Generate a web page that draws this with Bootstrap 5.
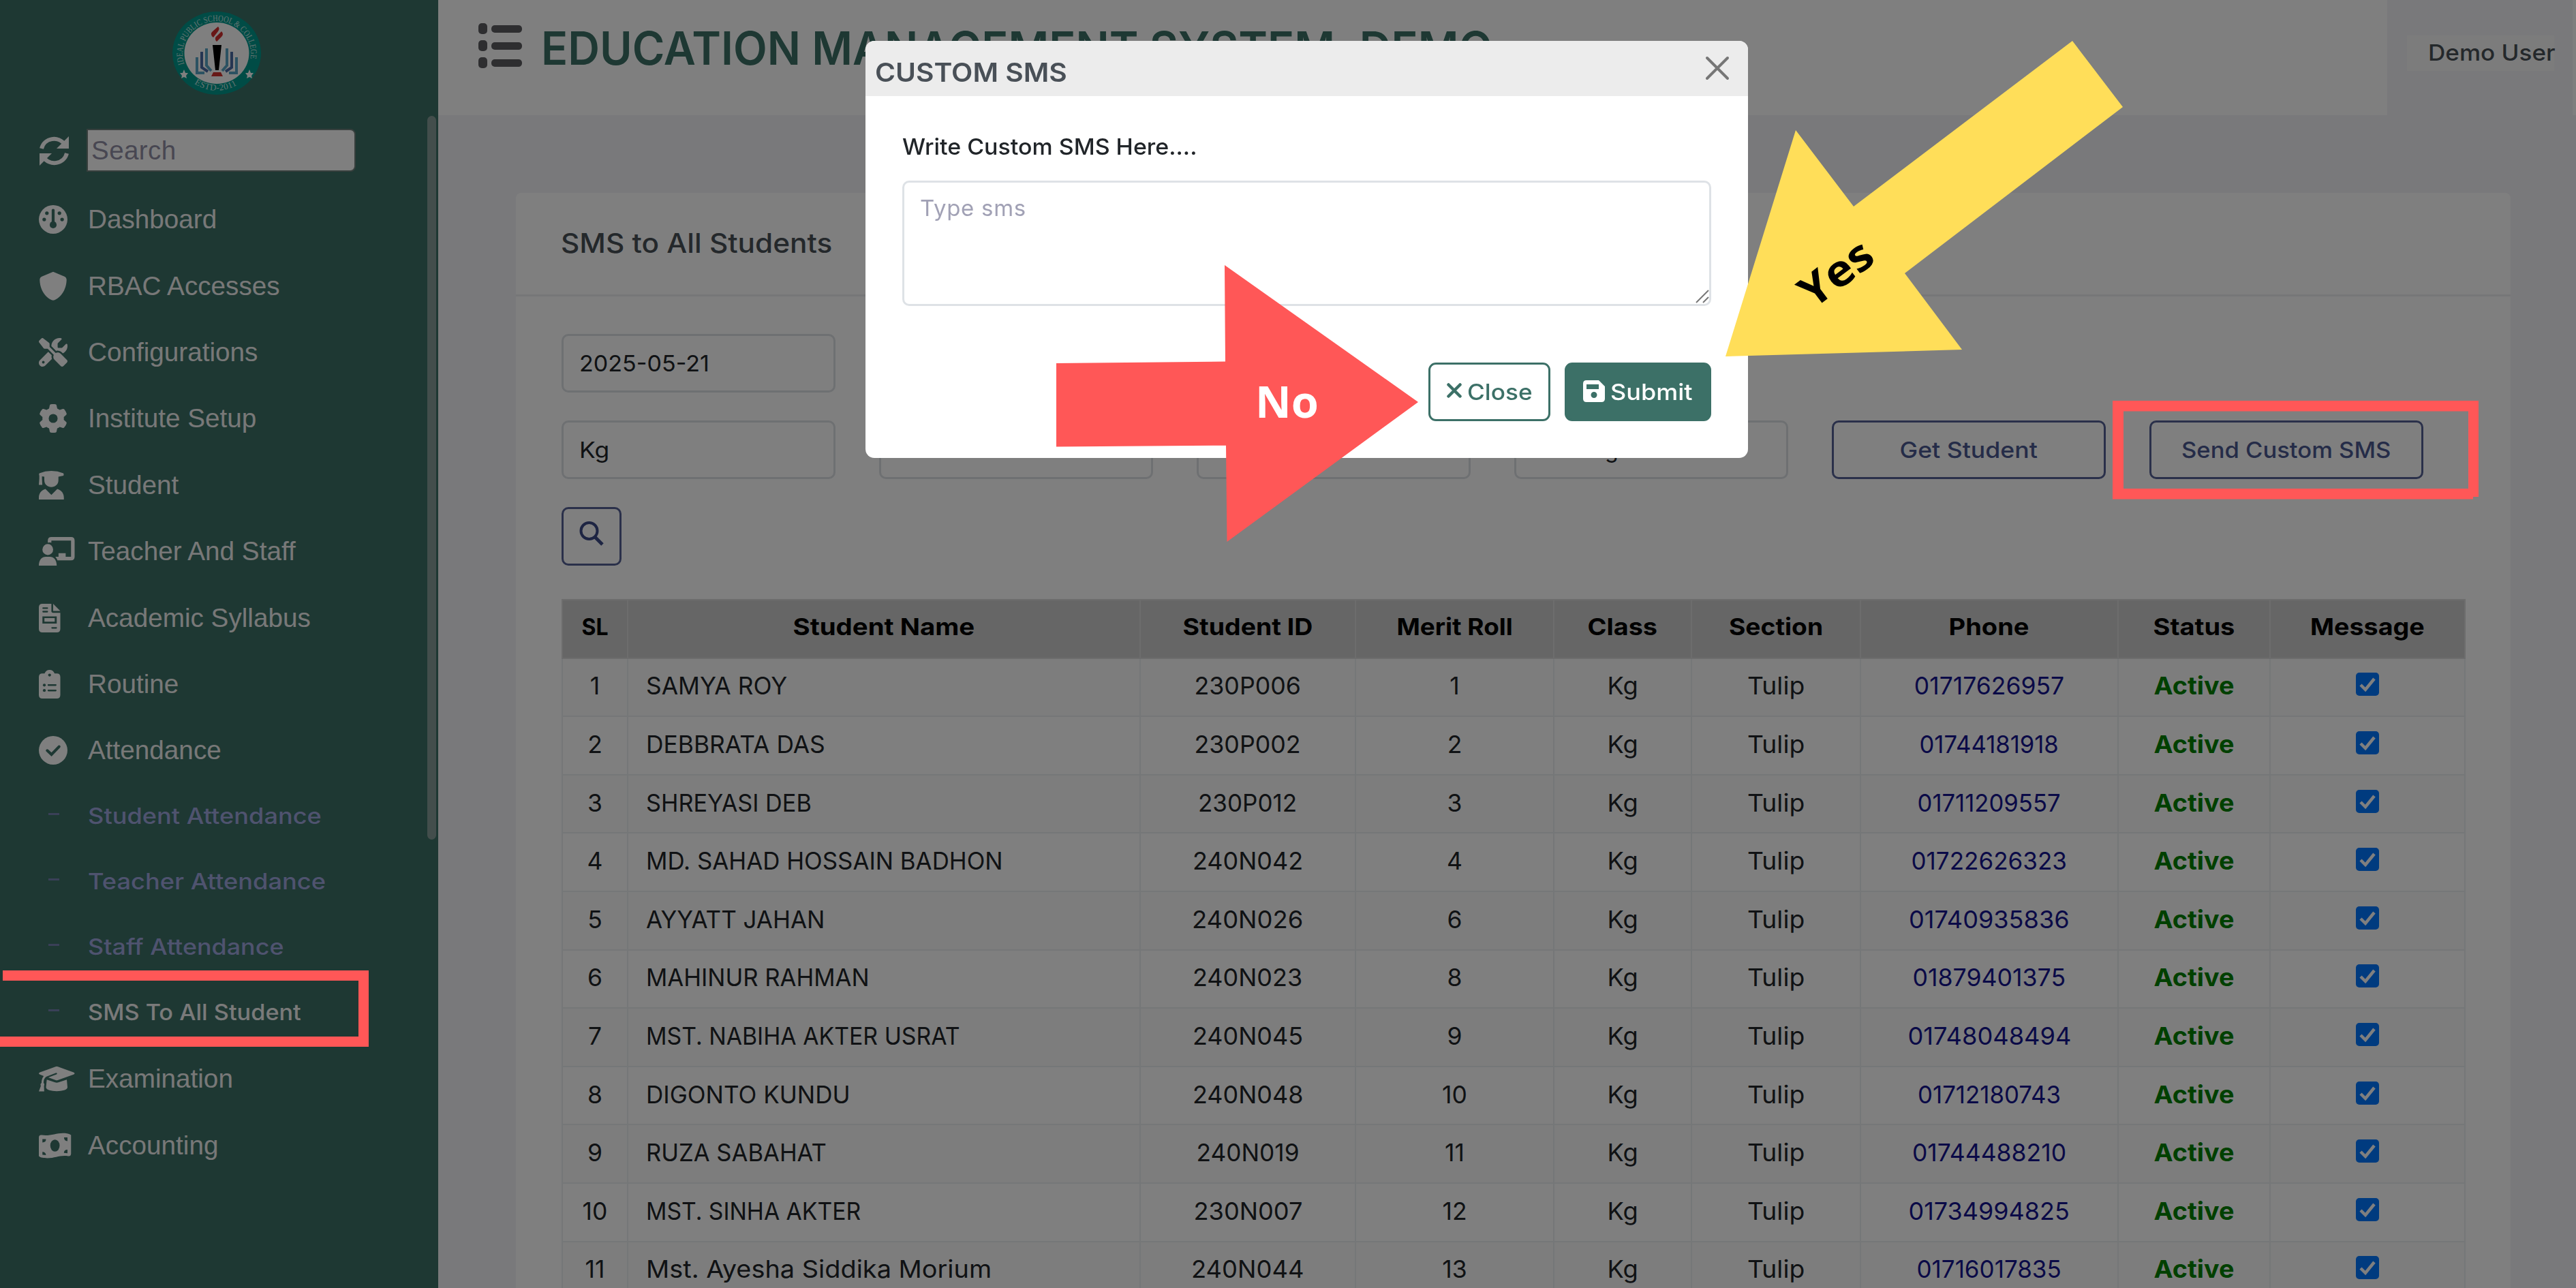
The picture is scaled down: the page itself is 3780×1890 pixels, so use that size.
<!DOCTYPE html>
<html lang="en">
<head>
<meta charset="utf-8">
<title>Education Management System</title>
<link href="https://cdn.jsdelivr.net/npm/bootstrap@5.3.0/dist/css/bootstrap.min.css" rel="stylesheet">
<style>
body{width:3780px;height:1890px;overflow:hidden;background:#f3f3f7;font-family:Inter,sans-serif;font-size:34px;line-height:1.5;color:#495057}
[data-w]{display:inline-block;white-space:nowrap;transform-origin:0 50%}
.btn-navy [data-w],.roster [data-w]{transform-origin:50% 50%}
.roster td:nth-child(2) [data-w]{transform-origin:0 50%}
.side{width:643px;height:1890px;background:#3c7067;position:relative;flex:none}
.side-thumb{position:absolute;left:627px;top:170px;width:13px;height:1062px;border-radius:7px;background:#869d98}
.logo-row{height:168px;padding:14px 0 0 250px}
.search-row{height:105.5px;padding:21px 0 0 57px}
.search-row svg{width:45px;height:45px;margin:10px 25px 0 0}
.search-row input{width:395px;height:63px;border:2px solid #6f7f7b;border-radius:0 8px 8px 0;background:#fff;padding:0 5px;font:38.6px "Liberation Sans",sans-serif;letter-spacing:.4px}
.search-row input::placeholder{color:#918fa5;opacity:1}
.side-link{height:97.4px;padding-left:57px;color:#f0f0f0;font:38.7px "Liberation Sans",sans-serif;text-decoration:none}
.side-link .ico{width:72px;height:42px;flex:none}
.side-link svg{height:42px;display:block;fill:#fff;overflow:visible}
.sub-link{height:96.2px;padding-left:71px;color:#9ea6de;font-weight:500;font-size:32.5px;text-decoration:none}
.sub-link i{width:16px;height:3px;background:#7580b0;margin:-8px 42px 0 0}
.sub-link.on{color:#f4f4f4}
.topbar{height:169px;background:#fff;padding-left:59px}
.topbar h1{font-size:67px;font-weight:600;color:#3c7067;margin:31px 0 0;line-height:80px}
.list-ico{width:64px;height:66px;margin:34px 28px 0 0}
.user-zone{width:272px;height:169px;background:#f3f3f7;margin-right:5px;padding:52px 27px 0 29px}
.user-chip{height:52px;background:#f9f9f9;color:#495057;font-weight:500;font-size:33px;line-height:51px;padding-left:31px}
.panel{margin:114px 96px 0 114px;width:2927px;height:1640px;border:0;border-radius:8px;background:#fff}
.panel-head{height:152px;border-bottom:3px solid #eceef1;padding:0 66px;font-weight:500;font-size:39px;color:#495057}
.panel-main{padding:55px 66px 0 67px}
.grid-row{gap:64px;margin-bottom:41px}
.grid-row .form-control{width:402px;height:86px;border:3px solid #dce0e4;border-radius:10px;font-size:33px;padding:1px 23px 0;color:#212529;background:#fff}
.btn-navy{width:402px;height:86px;border:3px solid #556195;border-radius:10px;color:#4a5890;font-size:33px;font-weight:500;padding:0;line-height:78px}
.roster{width:2792px;table-layout:fixed;font-size:35.5px;margin:49px 0 0;border-collapse:collapse}
.roster th,.roster td{height:85.6px;padding:0 0 2px;text-align:center;vertical-align:middle;border:2px solid #ebeef0!important;line-height:50px;color:#212529}
.roster th{background:#ccc!important;color:#000;font-weight:700;border-color:#dadada!important;font-size:34.5px;padding-bottom:5px}
.roster tr:nth-child(odd) td{background:#fbfbfb}
.roster td:nth-child(2){text-align:left;padding-left:26px}
.roster td:nth-child(7){color:#15158f}
.roster td:nth-child(8){color:#008000;font-weight:700}
.tick{width:34px;height:34px;display:block;margin:-6px auto 0}
.modal-backdrop{width:3780px;height:1890px;z-index:10}
.modal{z-index:20;overflow:hidden}
.modal-dialog{width:1295px;max-width:none;margin:60px 0 0 1270px}
.modal-content{height:612px;border:0;border-radius:13px;overflow:hidden}
.modal-header{height:81px;background:#ececec;border:0;padding:11px 27px 0 14px;border-radius:0}
.modal-header b{font-size:38px;font-weight:600;color:#495057}
.modal-body{padding:50px 54px 0}
.modal-body label{font-size:33px;font-weight:500;color:#212529;height:50px;margin-bottom:24px;display:block}
.modal-body textarea{width:1187px;height:184px;border:3px solid #dee2e6;border-radius:10px;font-size:33px;padding:13px 23px;resize:none;letter-spacing:.7px}
.modal-body textarea::placeholder{color:#a1a1b5;opacity:1}
.grip{position:absolute;left:1218px;top:284px;width:20px;height:20px}
.modal-foot{padding:83px 54px 0;gap:21px}
.modal-foot .btn{height:86px;border:3px solid #3c7067;border-radius:11px;font-size:33px;font-weight:500;padding:0 24px;line-height:78px}
.btn-shut{width:179px;color:#3c7067;background:#fff}
.btn-send{width:215px;color:#fff;background:#3c7067}
.notes{position:absolute;left:0;top:0;z-index:30}
</style>
</head>
<body>
<div class="d-flex">
<aside class="side">
  <div class="logo-row">
    <svg width="136" height="128" viewBox="-68 -64 136 128">
      <defs><path id="arcT" d="M-47.500 16 A50 48 0 1 1 47.500 16"/><path id="arcB" d="M-42 37 A57 55 0 0 0 42 37"/></defs>
      <ellipse rx="65" ry="61" fill="#00988c"/><ellipse rx="47.500" ry="45" fill="#fff"/>
      <g fill="#c5e5e0" font-family="Liberation Serif,serif" font-size="13"><text textLength="176" lengthAdjust="spacingAndGlyphs"><textPath href="#arcT">IDEAL PUBLIC SCHOOL &amp; COLLEGE</textPath></text><text textLength="66"><textPath href="#arcB" startOffset="12">ESTD-2011</textPath></text></g>
      <path fill="#fff" d="M-48 24l2 5 4 0-3 4 1 4-4-2-4 2 1-4-3-4 4 0zM48 24l2 5 4 0-3 4 1 4-4-2-4 2 1-4-3-4 4 0z"/>
      <path d="M2-39Q5-36 2-32L-5-23Q-11-28-6-32zM7-32Q11-28 7-24L0-17Q-5-22 1-26z" fill="#d22f2f"/>
      <path d="M-6-12H7L3 25H-2z" fill="#000"/><path d="M-5 28H6l3 6H-8z" fill="#d0332f"/>
      <g fill="none" stroke-width="4"><path d="M-29 6V29H-18M-15-7V18L-8 26M29 6V29H18M15-7V18L8 26" stroke="#58a5c5"/><path d="M-22-2V21L-13 27M22-2V21L13 27" stroke="#4a6aa5"/></g>
    </svg>
  </div>
  <div class="search-row d-flex align-items-start">
    <svg viewBox="0 0 45 45"><g fill="none" stroke="#fff" stroke-width="6"><path d="M4 19C8 3 29 0 38 13"/><path d="M41 26C37 42 16 45 7 32"/></g><path d="M44 1V19H26zM1 44V26H19z" fill="#fff"/></svg>
    <input placeholder="Search">
  </div>
  <nav id="menu"></nav>
  <div class="side-thumb"></div>
</aside>
<main class="flex-fill">
  <header class="topbar d-flex">
    <svg class="list-ico" viewBox="0 0 64 66" fill="#5c5c60"><rect y="0" width="13" height="16" rx="5"/><rect y="25" width="13" height="16" rx="5"/><rect y="50" width="13" height="16" rx="5"/><rect x="19" y="3" width="45" height="11" rx="5"/><rect x="19" y="28" width="45" height="11" rx="5"/><rect x="19" y="53" width="45" height="11" rx="5"/></svg>
    <h1><span data-w="1396">EDUCATION MANAGEMENT SYSTEM, DEMO</span></h1>
    <div class="user-zone ms-auto"><div class="user-chip"><span data-w="187">Demo User</span></div></div>
  </header>
  <section class="panel card">
    <div class="panel-head d-flex align-items-center"><span data-w="398">SMS to All Students</span></div>
    <div class="panel-main">
      <div class="grid-row d-flex"><div class="form-control d-flex align-items-center"><span data-w="191">2025-05-21</span></div></div>
      <div class="grid-row d-flex">
        <div class="form-control d-flex align-items-center"><span data-w="44">Kg</span></div>
        <div class="form-control"></div><div class="form-control"></div>
        <div class="form-control d-flex align-items-center"><span data-w="127">Morning</span></div>
        <button class="btn btn-navy"><span data-w="202">Get Student</span></button>
        <button class="btn btn-navy"><span data-w="307">Send Custom SMS</span></button>
      </div>
      <button class="btn btn-navy d-flex align-items-center justify-content-center" style="width:88px"><svg width="36" height="38" viewBox="0 0 36 38" style="margin:-8px 0 0" fill="none" stroke="#3d4a86" stroke-width="4"><circle cx="14.500" cy="15" r="12"/><path d="M23 24L34 35" stroke-width="5"/></svg></button>
      <table class="roster table">
        <colgroup><col style="width:96px"><col style="width:752px"><col style="width:316px"><col style="width:291px"><col style="width:202px"><col style="width:248px"><col style="width:378px"><col style="width:223px"><col style="width:286px"></colgroup>
        <thead><tr><th><span data-w="39">SL</span></th><th><span data-w="267">Student Name</span></th><th><span data-w="191">Student ID</span></th><th><span data-w="170">Merit Roll</span></th><th><span data-w="103">Class</span></th><th><span data-w="138">Section</span></th><th><span data-w="118">Phone</span></th><th><span data-w="120">Status</span></th><th><span data-w="168">Message</span></th></tr></thead>
        <tbody id="rows"></tbody>
      </table>
    </div>
  </section>
</main>
</div>

<div class="modal-backdrop show"></div>
<div class="modal d-block">
  <div class="modal-dialog">
    <div class="modal-content">
      <div class="modal-header d-flex align-items-center">
        <b><span data-w="282">CUSTOM SMS</span></b>
        <svg width="36" height="36" viewBox="0 0 36 36" style="margin-top:-13px" stroke="#767676" stroke-width="4" stroke-linecap="round"><path d="M3 3L33 33M33 3L3 33"/></svg>
      </div>
      <div class="modal-body flex-grow-0">
        <label><span data-w="432">Write Custom SMS Here....</span></label>
        <textarea class="d-block" placeholder="Type sms"></textarea>
        <svg class="grip" viewBox="0 0 20 20" stroke="#777" stroke-width="2"><path d="M1 19L19 1M11 19L19 11"/></svg>
      </div>
      <div class="modal-foot d-flex justify-content-end">
        <button class="btn btn-shut d-flex align-items-center"><svg class="flex-shrink-0" width="22" height="22" viewBox="0 0 22 22" style="margin:-5px 8px 0 0" stroke="#3c7067" stroke-width="4.500" stroke-linecap="round"><path d="M2.500 2.500L19.500 19.500M19.500 2.500L2.500 19.500"/></svg><span data-w="96">Close</span></button>
        <button class="btn btn-send d-flex align-items-center"><svg class="flex-shrink-0" width="32" height="32" viewBox="0 0 32 32" style="margin:-3px 8px 0 0"><path fill="#fff" fill-rule="evenodd" d="M5 0H23L32 9V27Q32 32 27 32H5Q0 32 0 27V5Q0 0 5 0ZM5 6V13H23V6ZM16 17A4.500 4.500 0 1 0 16 26 4.500 4.500 0 1 0 16 17Z"/></svg><span data-w="120">Submit</span></button>
      </div>
    </div>
  </div>
</div>

<svg class="notes" width="3780" height="1890" font-family="Open Sans,sans-serif" font-weight="700" font-size="64">
  <g fill="#ff5757">
    <path d="M4 1424H541V1536H0V1521H526V1439H4z"/>
    <path fill-rule="evenodd" d="M3100 588H3637V729H3629V732.500H3100zM3116 603.500V717H3622V603.500z"/>
    <path d="M1550 533L1798 530.500L1797 389L2081 590L1800.500 795L1799 653.700L1550 655.600z"/>
  </g>
  <text x="1842" y="613" fill="#fff" textLength="93" lengthAdjust="spacingAndGlyphs">No</text>
  <path fill="#ffde59" d="M2532 523L2635 191L2720 303L3041 60L3115 157L2795 401L2879 513z"/>
  <text transform="translate(2698 406) rotate(-37.100)" text-anchor="middle" y="16" fill="#000" textLength="118" lengthAdjust="spacingAndGlyphs">Yes</text>
</svg>

<script>
const D='#3c7067';
const ico={
gauge:['0 0 512 512',`<circle cx="256" cy="256" r="256"/><g fill="${D}"><circle cx="256" cy="352" r="62"/><rect x="230" y="66" width="52" height="290" rx="26"/><circle cx="144" cy="144" r="32"/><circle cx="368" cy="144" r="32"/><circle cx="96" cy="256" r="32"/><circle cx="416" cy="256" r="32"/></g>`],
shield:['0 0 512 512','<path d="M256 0c4.600 0 9.200 1 13.400 2.900L457.700 82.800c22 9.300 38.400 31 38.300 57.200c-.5 99.200-41.300 280.700-213.600 363.200c-16.700 8-36.100 8-52.800 0C57.300 420.700 16.500 239.200 16 140c-.1-26.200 16.300-47.900 38.300-57.200L242.700 2.900C246.800 1 251.400 0 256 0z"/>'],
tools:['0 0 512 512','<path d="M78.600 5C69.100-2.400 55.600-1.500 47 7L7 47c-8.500 8.500-9.400 22-2.100 31.600l80 104c4.500 5.900 11.600 9.400 19 9.400h54.100l109 109c-14.700 29-10 65.400 14.300 89.600l112 112c12.500 12.500 32.800 12.500 45.300 0l64-64c12.500-12.500 12.500-32.800 0-45.300l-112-112c-24.200-24.200-60.600-29-89.600-14.300l-109-109V104c0-7.500-3.500-14.500-9.400-19L78.600 5zM19.900 396.100C7.200 408.800 0 426.100 0 444.100C0 481.600 30.400 512 67.900 512c18 0 35.300-7.200 48-19.900L233.700 374.300c-7.800-20.900-9-43.600-3.600-65.100l-61.700-61.700L19.900 396.100zM512 144c0-10.500-1.100-20.700-3.200-30.500c-2.400-11.200-16.100-14.100-24.200-6l-63.900 63.900c-3 3-7.100 4.700-11.300 4.700H352c-8.800 0-16-7.200-16-16V102.600c0-4.200 1.700-8.300 4.700-11.300l63.900-63.900c8.100-8.100 5.200-21.800-6-24.200C388.700 1.100 378.500 0 368 0C288.500 0 224 64.500 224 144l0 .8 85.300 85.300c36-9.100 75.800 .5 104 28.700L429 274.500c49-23 83-72.800 83-130.500zM56 432a24 24 0 1 1 48 0 24 24 0 1 1 -48 0z"/>'],
gear:['0 0 512 512','<path d="M495.900 166.600c3.200 8.700 .5 18.400-6.400 24.600l-43.300 39.400c1.100 8.300 1.700 16.800 1.700 25.400s-.6 17.100-1.700 25.400l43.300 39.400c6.900 6.200 9.600 15.900 6.400 24.600c-4.400 11.900-9.700 23.300-15.800 34.300l-4.700 8.100c-6.600 11-14 21.400-22.100 31.200c-5.900 7.200-15.700 9.600-24.500 6.800l-55.700-17.700c-13.400 10.300-28.200 18.900-44 25.400l-12.500 57.100c-2 9.100-9 16.300-18.200 17.800c-13.800 2.300-28 3.500-42.500 3.500s-28.700-1.200-42.500-3.500c-9.200-1.500-16.200-8.700-18.200-17.800l-12.500-57.100c-15.800-6.500-30.600-15.100-44-25.400L83.100 425.900c-8.800 2.800-18.600 .3-24.500-6.800c-8.100-9.800-15.500-20.200-22.100-31.200l-4.700-8.100c-6.100-11-11.400-22.400-15.800-34.300c-3.200-8.700-.5-18.400 6.400-24.600l43.300-39.400C64.600 273.100 64 264.600 64 256s.6-17.100 1.700-25.400L22.400 191.200c-6.900-6.200-9.600-15.900-6.400-24.600c4.400-11.900 9.700-23.300 15.800-34.300l4.700-8.100c6.600-11 14-21.400 22.100-31.200c5.900-7.200 15.700-9.600 24.500-6.800l55.700 17.700c13.400-10.300 28.200-18.900 44-25.400l12.500-57.100c2-9.100 9-16.300 18.200-17.800C227.300 1.200 241.500 0 256 0s28.700 1.200 42.500 3.500c9.200 1.500 16.200 8.700 18.200 17.800l12.500 57.100c15.800 6.500 30.600 15.100 44 25.400l55.700-17.700c8.800-2.800 18.600-.3 24.500 6.800c8.100 9.800 15.500 20.200 22.100 31.200l4.700 8.100c6.100 11 11.400 22.400 15.800 34.300zM256 336a80 80 0 1 0 0-160 80 80 0 1 0 0 160z"/>'],
grad:['0 0 448 512','<path d="M8 42Q224-40 440 42Q452 68 440 86L350 104V165C350 330 98 330 98 165V104L56 96V140L62 250H0L8 140V86Q-4 60 8 42zM118 322L224 430 330 322C420 345 448 420 448 480V512H0V480C0 420 28 345 118 322z"/>'],
teach:['0 0 640 512','<path d="M160 66Q160 0 226 0H576Q640 0 640 64V352Q640 416 576 416H332Q322 385 295 352H352V288H480V352H576V64H224V100Q195 92 160 100zM0 512C0 400 60 352 120 352H200C260 352 320 400 320 512z"/><ellipse cx="160" cy="224" rx="96" ry="98"/>'],
file:['0 0 384 512',`<path d="M64 0H224V128Q224 160 256 160H384V448Q384 512 320 512H64Q0 512 0 448V64Q0 0 64 0zM256 0L384 128H256z"/><g fill="${D}"><rect x="64" y="64" width="100" height="28" rx="10"/><rect x="64" y="126" width="100" height="28" rx="10"/><rect x="224" y="416" width="100" height="28" rx="10"/><path fill-rule="evenodd" d="M64 224H320V352H64zM100 256V320H284V256z"/></g>`],
clip:['0 0 384 512',`<path d="M192 0Q255 0 282 64H320Q384 64 384 128V448Q384 512 320 512H64Q0 512 0 448V128Q0 64 64 64H102Q129 0 192 0z"/><g fill="${D}"><circle cx="192" cy="92" r="26"/><circle cx="98" cy="272" r="26"/><circle cx="98" cy="368" r="26"/><rect x="156" y="256" width="160" height="30" rx="14"/><rect x="156" y="353" width="160" height="30" rx="14"/></g>`],
check:['0 0 512 512',`<circle cx="256" cy="256" r="256"/><path d="M150 260L226 330 362 190" fill="none" stroke="${D}" stroke-width="50" stroke-linecap="round"/>`],
cap:['0 0 640 512',`<path d="M320 32Q330 32 620 140Q660 160 620 180L338 280Q320 286 302 280L170 232 316 176Q340 160 310 148L130 220Q84 256 84 330Q108 350 92 384L96 480H0L36 384Q20 350 48 328Q48 250 88 206L20 180Q-20 160 20 140Q310 32 320 32zM142 270L290 320Q320 330 350 320L500 270 512 408C512 500 128 500 128 408z"/>`],
money:['0 0 576 512',`<path d="M0 112Q0 64 50 68C200 90 300 32 430 32 480 32 530 34 576 66V400Q576 450 526 444C380 420 300 480 150 480 90 480 30 476 0 446z"/><g fill="${D}"><ellipse cx="288" cy="256" rx="84" ry="106"/><path d="M64 140H128Q128 200 64 200zM512 110V178Q450 172 450 110zM64 370Q120 370 128 426L64 422zM512 330V392L448 388Q450 330 512 330z"/></g>`]};
const link=(i,t)=>`<a class="side-link d-flex align-items-center"><span class="ico"><svg viewBox="${ico[i][0]}">${ico[i][1]}</svg></span><span>${t}</span></a>`;
const sub=(t,w,on)=>`<a class="sub-link d-flex align-items-center ${on?'on':''}"><i></i><span data-w="${w}">${t}</span></a>`;
document.getElementById('menu').innerHTML=[['gauge','Dashboard'],['shield','RBAC Accesses'],['tools','Configurations'],['gear','Institute Setup'],['grad','Student'],['teach','Teacher And Staff'],['file','Academic Syllabus'],['clip','Routine'],['check','Attendance']].map(a=>link(...a)).join('')
+sub('Student Attendance',343)+sub('Teacher Attendance',349)+sub('Staff Attendance',288)+sub('SMS To All Student',313,1)
+link('cap','Examination')+link('money','Accounting');
const data=[['SAMYA ROY',207,'230P006',156,1,'01717626957',220],['DEBBRATA DAS',263,'230P002',156,2,'01744181918',204],['SHREYASI DEB',243,'230P012',145,3,'01711209557',210],['MD. SAHAD HOSSAIN BADHON',524,'240N042',162,4,'01722626323',228],['AYYATT JAHAN',262,'240N026',163,6,'01740935836',236],['MAHINUR RAHMAN',328,'240N023',161,8,'01879401375',225],['MST. NABIHA AKTER USRAT',461,'240N045',162,9,'01748048494',240],['DIGONTO KUNDU',300,'240N048',162,10,'01712180743',210],['RUZA SABAHAT',265,'240N019',151,11,'01744488210',226],['MST. SINHA AKTER',315,'230N007',160,12,'01734994825',236],['Mst. Ayesha Siddika Morium',507,'240N044',165,13,'01716017835',212]];
const tick='<svg class="tick" viewBox="0 0 34 34"><rect width="34" height="34" rx="5" fill="#0077ff"/><path d="M7 18L14 25 27 9" fill="none" stroke="#fff" stroke-width="4.500"/></svg>';
const s=(t,w)=>`<span data-w="${w}">${t}</span>`;
document.getElementById('rows').innerHTML=data.map((r,i)=>`<tr><td>${i+1}</td><td>${s(r[0],r[1])}</td><td>${s(r[2],r[3])}</td><td>${r[4]}</td><td>${s('Kg',45)}</td><td>${s('Tulip',84)}</td><td>${s(r[5],r[6])}</td><td>${s('Active',118)}</td><td>${tick}</td></tr>`).join('');
/* widen each label to its measure */
document.querySelectorAll('[data-w]').forEach(e=>{e.style.transform='scaleX('+(e.dataset.w/e.offsetWidth).toFixed(4)+')'});
</script>
<script src="https://cdn.jsdelivr.net/npm/bootstrap@5.3.0/dist/js/bootstrap.bundle.min.js"></script>
</body>
</html>
